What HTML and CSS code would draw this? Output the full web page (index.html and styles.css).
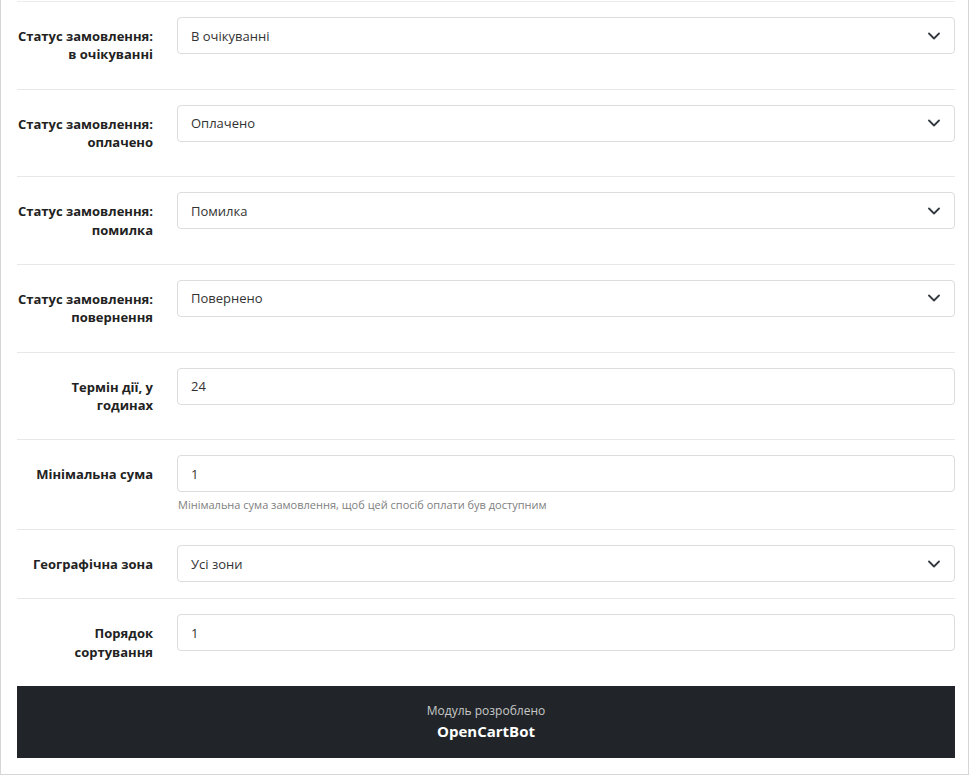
FILE: index.html
```html
<!DOCTYPE html>
<html lang="uk">
    <head>
        <meta charset="UTF-8" />
        <meta name="viewport" content="width=device-width, initial-scale=1.0" />
        <title>Налаштування модуля оплати</title>
        <link rel="stylesheet" href="styles.css">
    </head>
    <body>
        <div class="card">
            <!-- Order statuses -->
            <div class="form-row">
                <label class="form-label">Статус замовлення: в очікуванні</label>
                <div class="form-field">
                    <div class="form-select">
                        <span>В очікуванні</span>
                        <svg class="chevron" viewBox="0 0 12 8"><path d="M1 1.5l5 5 5-5" /></svg>
                    </div>
                </div>
            </div>

            <div class="form-row">
                <label class="form-label">Статус замовлення: оплачено</label>
                <div class="form-field">
                    <div class="form-select">
                        <span>Оплачено</span>
                        <svg class="chevron" viewBox="0 0 12 8"><path d="M1 1.5l5 5 5-5" /></svg>
                    </div>
                </div>
            </div>

            <div class="form-row">
                <label class="form-label">Статус замовлення: помилка</label>
                <div class="form-field">
                    <div class="form-select">
                        <span>Помилка</span>
                        <svg class="chevron" viewBox="0 0 12 8"><path d="M1 1.5l5 5 5-5" /></svg>
                    </div>
                </div>
            </div>

            <div class="form-row">
                <label class="form-label">Статус замовлення: повернення</label>
                <div class="form-field">
                    <div class="form-select">
                        <span>Повернено</span>
                        <svg class="chevron" viewBox="0 0 12 8"><path d="M1 1.5l5 5 5-5" /></svg>
                    </div>
                </div>
            </div>

            <!-- Other settings -->
            <div class="form-row">
                <label class="form-label">Термін дії, у годинах</label>
                <div class="form-field">
                    <input class="form-control" type="text" value="24" />
                </div>
            </div>

            <div class="form-row">
                <label class="form-label single">Мінімальна сума</label>
                <div class="form-field">
                    <input class="form-control" type="text" value="1" />
                    <div class="form-text">Мінімальна сума замовлення, щоб цей спосіб оплати був доступним</div>
                </div>
            </div>

            <div class="form-row">
                <label class="form-label single">Географічна зона</label>
                <div class="form-field">
                    <div class="form-select">
                        <span>Усі зони</span>
                        <svg class="chevron" viewBox="0 0 12 8"><path d="M1 1.5l5 5 5-5" /></svg>
                    </div>
                </div>
            </div>

            <div class="form-row">
                <label class="form-label">Порядок сортування</label>
                <div class="form-field">
                    <input class="form-control" type="text" value="1" />
                </div>
            </div>

            <div class="footer">
                <div class="footer-note">Модуль розроблено</div>
                <div class="footer-brand">OpenCartBot</div>
            </div>
        </div>
    </body>
</html>
```

FILE: styles.css
```css
body {
    margin: 0;
    font-family: "Open Sans", "Noto Sans", sans-serif;
    font-size: 13px;
    color: #333;
    background: #fff;
}
.card {
    width: 938px;
    padding: 1px 13px 16px 16px;
    border: 1px solid #d6d6d6;
    border-top: none;
    background: #fff;
}
.form-row {
    display: grid;
    grid-template-columns: 136px 1fr;
    column-gap: 24px;
    align-items: start;
    padding: 15px 0;
    border-top: 1px solid #e8e8e8;
}
.form-row:first-child {
    border-top: 1px solid #ececec;
}
.form-label {
    text-align: right;
    font-weight: bold;
    color: #222;
    line-height: 18.33px;
    padding: 10px 0;
}
.form-label.single {
    line-height: 18px;
}
.form-select,
.form-control {
    box-sizing: border-box;
    width: 100%;
    height: 37px;
    border: 1px solid #dcdcdc;
    border-radius: 4px;
    background: #fff;
    font-family: inherit;
    font-size: 13px;
    color: #333;
    padding: 0 14px 0 13px;
}
.form-select {
    display: flex;
    align-items: center;
    justify-content: space-between;
}
.form-control {
    display: block;
    outline: none;
}
.chevron {
    width: 12px;
    height: 8px;
    fill: none;
    stroke: #343a40;
    stroke-width: 1.8;
    stroke-linecap: round;
    stroke-linejoin: round;
}
.form-text {
    margin-top: 4px;
    font-size: 11px;
    line-height: 18px;
    color: #808080;
    padding-left: 1px;
}
.footer {
    background: #212529;
    padding: 16px 0;
    text-align: center;
}
.footer-note {
    font-size: 12px;
    line-height: 18px;
    color: #c8c8c8;
}
.footer-brand {
    font-size: 15px;
    line-height: 22px;
    font-weight: bold;
    color: #fff;
}
```
